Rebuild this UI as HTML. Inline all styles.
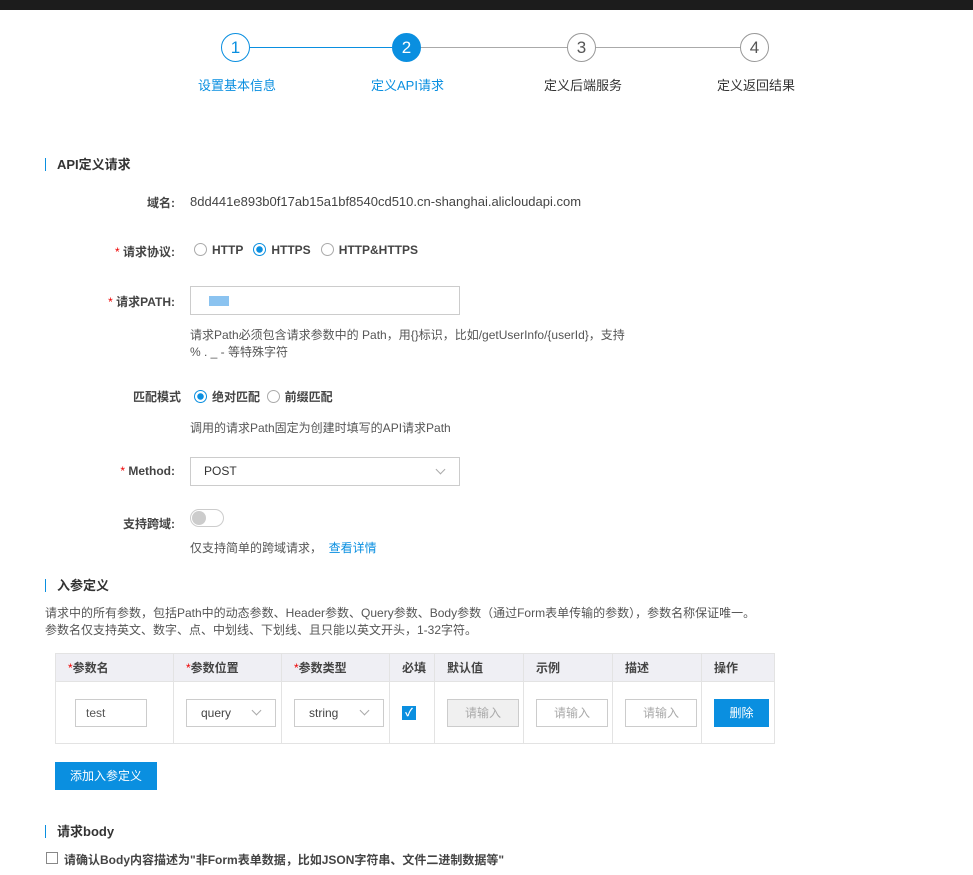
<!DOCTYPE html>
<html><head><meta charset="utf-8"><style>
*{margin:0;padding:0;box-sizing:border-box}
body{width:973px;height:875px;background:#fff;position:relative;overflow:hidden;font-family:"Liberation Sans","Noto Sans CJK SC",sans-serif;font-size:12px;color:#333}
.a{position:absolute;white-space:nowrap}
.c{position:absolute;width:29px;height:29px;border-radius:50%;border:1px solid #999;text-align:center;line-height:27px;font-size:17px;color:#555;background:#fff}
.line{position:absolute;height:1px;top:47px}
.lbl{position:absolute;text-align:right;width:175px;left:0;font-weight:bold;color:#444}
.st{color:#e00;font-weight:normal}
.rad{display:inline-block;width:13px;height:13px;border-radius:50%;border:1px solid #aaa;vertical-align:-2px;margin-right:5px}
.rad.on{border-color:#0a8fe0;background:radial-gradient(#0a8fe0 3px,#fff 3.5px)}
.box{position:absolute;border:1px solid #ccc;background:#fff}
.hint{color:#555}
.sec{position:absolute;left:45px;font-weight:bold;font-size:13px;padding-left:11px;border-left:1px solid #0a8fe0;line-height:13px}
.dd{position:absolute;width:7px;height:7px;border-right:1px solid #aaa;border-bottom:1px solid #aaa;transform:rotate(45deg)}
table{position:absolute;left:55px;top:653px;border-collapse:collapse}
td,th{border:1px solid #e3e3e3;height:28px;text-align:left;padding-left:12px;font-weight:bold;color:#444}
th{background:#efeff4}
td{height:62px}
.ip{display:inline-block;border:1px solid #ccc;height:28px;line-height:26px;color:#aaa;font-weight:normal;text-align:center;position:relative}
</style></head><body>
<div class="a" style="left:0;top:0;width:973px;height:10px;background:#1c1c1c"></div>
<div class="line" style="left:250px;width:142px;background:#0a8fe0"></div>
<div class="line" style="left:420px;width:148px;background:#aaa"></div>
<div class="line" style="left:595px;width:146px;background:#aaa"></div>
<div class="c" style="left:221px;top:33px;border-color:#0a8fe0;color:#0a8fe0">1</div>
<div class="c" style="left:392px;top:33px;border-color:#0a8fe0;background:#0a8fe0;color:#fff">2</div>
<div class="c" style="left:567px;top:33px">3</div>
<div class="c" style="left:740px;top:33px">4</div>
<div class="a" style="left:198px;top:75px;font-size:13px;color:#0a8fe0">设置基本信息</div>
<div class="a" style="left:371px;top:75px;font-size:13px;color:#0a8fe0">定义API请求</div>
<div class="a" style="left:544px;top:75px;font-size:13px;color:#333">定义后端服务</div>
<div class="a" style="left:717px;top:75px;font-size:13px;color:#333">定义返回结果</div>

<div class="sec" style="top:158px">API定义请求</div>
<div class="lbl" style="top:194px">域名:</div>
<div class="a" style="left:190px;top:194px;font-size:13px;color:#444">8dd441e893b0f17ab15a1bf8540cd510.cn-shanghai.alicloudapi.com</div>
<div class="lbl" style="top:243px"><span class="st">* </span>请求协议:</div>
<div class="a" style="left:194px;top:243px;font-weight:bold;color:#444"><span class="rad"></span>HTTP&nbsp;&nbsp; <span class="rad on"></span>HTTPS&nbsp;&nbsp; <span class="rad"></span>HTTP&amp;HTTPS</div>
<div class="lbl" style="top:293px"><span class="st">* </span>请求PATH:</div>
<div class="box" style="left:190px;top:286px;width:270px;height:29px"></div>
<div class="a" style="left:209px;top:296px;width:20px;height:10px;background:#8bc3f0"></div>
<div class="a hint" style="left:190px;top:327px;line-height:17px">请求Path必须包含请求参数中的 Path，用{}标识，比如/getUserInfo/{userId}，支持<br>% . _ - 等特殊字符</div>
<div class="lbl" style="top:388px;width:181px">匹配模式</div>
<div class="a" style="left:194px;top:388px;font-weight:bold;color:#444"><span class="rad on"></span>绝对匹配&nbsp; <span class="rad"></span>前缀匹配</div>
<div class="a hint" style="left:190px;top:419px">调用的请求Path固定为创建时填写的API请求Path</div>
<div class="lbl" style="top:464px"><span class="st">* </span>Method:</div>
<div class="box" style="left:190px;top:457px;width:270px;height:29px"></div>
<div class="a" style="left:204px;top:464px">POST</div>
<div class="dd" style="left:437px;top:466px"></div>
<div class="lbl" style="top:515px">支持跨域:</div>
<div class="a" style="left:190px;top:509px;width:34px;height:18px;border:1px solid #ccc;border-radius:9px"></div>
<div class="a" style="left:192px;top:511px;width:14px;height:14px;border-radius:50%;background:#ccc"></div>
<div class="a hint" style="left:190px;top:539px">仅支持简单的跨域请求， <span style="color:#0a8fe0">&nbsp;查看详情</span></div>

<div class="sec" style="top:579px">入参定义</div>
<div class="a hint" style="left:45px;top:605px;line-height:17px">请求中的所有参数，包括Path中的动态参数、Header参数、Query参数、Body参数（通过Form表单传输的参数），参数名称保证唯一。<br>参数名仅支持英文、数字、点、中划线、下划线、且只能以英文开头，1-32字符。</div>
<table>
<tr><th style="width:118px"><span class="st">*</span>参数名</th><th style="width:108px"><span class="st">*</span>参数位置</th><th style="width:108px"><span class="st">*</span>参数类型</th><th style="width:45px">必填</th><th style="width:89px">默认值</th><th style="width:89px">示例</th><th style="width:89px">描述</th><th style="width:73px">操作</th></tr>
<tr><td style="padding-left:19px"><span class="ip" style="width:72px;color:#555;text-align:left;padding-left:10px">test</span></td>
<td><span class="ip" style="width:90px;color:#444;text-align:left;padding-left:14px">query</span></td>
<td><span class="ip" style="width:90px;color:#444;text-align:left;padding-left:14px">string</span></td>
<td><span style="display:inline-block;width:14px;height:14px;background:#0a8fe0;color:#fff;font-size:11px;line-height:14px;text-align:center">✓</span></td>
<td><span class="ip" style="width:72px;background:#f0f0f0">请输入</span></td>
<td><span class="ip" style="width:72px">请输入</span></td>
<td><span class="ip" style="width:72px">请输入</span></td>
<td><span class="ip" style="width:55px;background:#0a8fe0;border-color:#0a8fe0;color:#fff">删除</span></td></tr>
</table>
<div class="dd" style="left:253px;top:707px"></div>
<div class="dd" style="left:361px;top:707px"></div>
<div class="a" style="left:55px;top:762px;width:102px;height:28px;background:#0a8fe0;color:#fff;text-align:center;line-height:28px">添加入参定义</div>

<div class="sec" style="top:825px">请求body</div>
<div class="a" style="left:46px;top:852px;width:12px;height:12px;border:1px solid #888"></div>
<div class="a" style="left:64px;top:851px;font-weight:bold;color:#444">请确认Body内容描述为"非Form表单数据，比如JSON字符串、文件二进制数据等"</div>
</body></html>
